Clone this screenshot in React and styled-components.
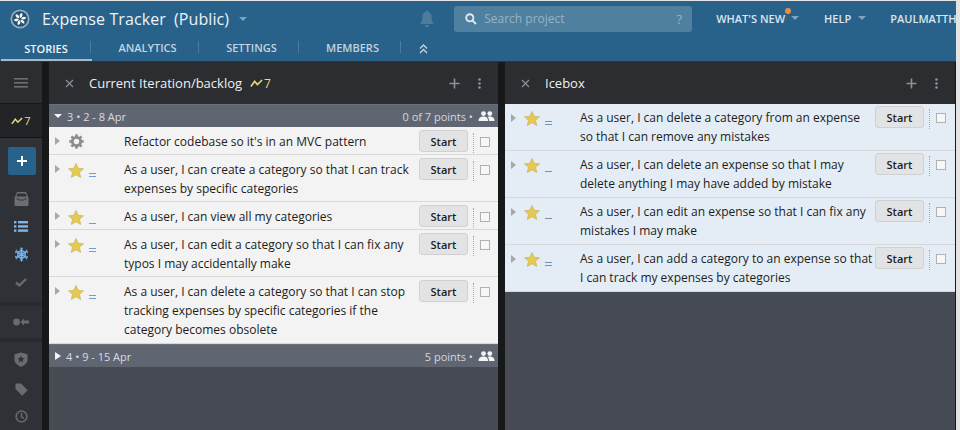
import React from 'react';
import styled, { createGlobalStyle } from 'styled-components';

const GlobalStyle = createGlobalStyle`
  html, body {
    margin: 0;
    padding: 0;
    background: #e4e4e4;
  }
  body {
    width: 960px;
    height: 430px;
    overflow: hidden;
    font-family: "Open Sans", "Liberation Sans", sans-serif;
  }
`;

const Page = styled.div`
  width: 956px;
  height: 429px;
  margin-top: 1px;
  display: flex;
  flex-direction: column;
  overflow: hidden;
  background: #17181a;
`;

const Header = styled.header`
  height: 61px;
  flex: none;
  background: #28628b;
  display: flex;
  flex-direction: column;
  border-bottom: 1px solid #1f3a4e;
  box-sizing: border-box;
`;

const TopRow = styled.div`
  height: 35px;
  flex: none;
  display: flex;
  align-items: center;
  padding-left: 10px;
  white-space: nowrap;
`;

const ProjectName = styled.div`
  margin-left: 12px;
  font-size: 16px;
  letter-spacing: 0.1px;
  color: #eef3f7;
  display: flex;
  gap: 8px;
`;

const Caret = styled.span`
  display: inline-block;
  flex: none;
  width: 0;
  height: 0;
  border-left: 4px solid transparent;
  border-right: 4px solid transparent;
  border-top: 4px solid ${(p) => p.$color || '#7fa3bd'};
  margin-left: ${(p) => p.$gap || 0}px;
  position: relative;
  top: ${(p) => p.$top || 0}px;
`;

const Bell = styled.div`
  margin-left: 173px;
  margin-right: 20px;
  display: flex;
  flex: none;
`;

const Search = styled.div`
  width: 238px;
  height: 26px;
  flex: none;
  background: #4f80a0;
  border-radius: 3px;
  display: flex;
  align-items: center;
  padding: 0 10px 0 11px;
  box-sizing: border-box;
  font-size: 12px;
  color: #95b3c8;
  gap: 7px;
`;

const SearchHint = styled.span`
  margin-left: auto;
  font-size: 13px;
`;

const TopLinks = styled.nav`
  margin-left: 24px;
  display: flex;
  align-items: center;
  flex: 1;
  min-width: 0;
  height: 100%;
`;

const TopLink = styled.span`
  position: relative;
  flex: none;
  font-size: 11px;
  font-weight: 600;
  color: #dbe6ee;
  margin-left: ${(p) => p.$space || 0}px;
`;

const Dot = styled.span`
  position: absolute;
  right: -6px;
  top: -3px;
  width: 6px;
  height: 6px;
  border-radius: 50%;
  background: #f08a35;
`;

const TabRow = styled.div`
  flex: 1;
  display: flex;
  align-items: flex-start;
  padding-top: 5px;
  position: relative;
`;

const Tab = styled.div`
  width: ${(p) => p.$w}px;
  height: 12px;
  display: flex;
  align-items: center;
  justify-content: center;
  box-sizing: border-box;
  padding-left: ${(p) => (p.$active ? 2 : 6)}px;
  padding-top: ${(p) => (p.$active ? 2 : 0)}px;
  font-size: 11px;
  font-weight: 600;
  color: ${(p) => (p.$active ? '#eef3f7' : '#c3d3df')};
  border-right: 1px solid #4a7c9e;
`;

const ActiveLine = styled.div`
  position: absolute;
  left: 1px;
  bottom: 0;
  width: 91px;
  height: 2px;
  background: #aab9c4;
`;

const Collapse = styled.div`
  margin-left: 18px;
  margin-top: 3px;
  display: flex;
`;

const Body = styled.div`
  flex: 1;
  display: flex;
  min-height: 0;
`;

const Sidebar = styled.aside`
  width: 42px;
  flex: none;
  background: #2e3236;
  display: flex;
  flex-direction: column;
`;

const SideTop = styled.div`
  height: 42px;
  flex: none;
  box-sizing: border-box;
  background: #2b2d30;
  border-bottom: 1px solid #16171a;
  display: flex;
  align-items: center;
  justify-content: center;
`;

const SideCount = styled.div`
  height: 34px;
  flex: none;
  box-sizing: border-box;
  background: #232427;
  border-bottom: 1px solid #111;
  display: flex;
  align-items: center;
  justify-content: center;
  gap: 1px;
  font-size: 11px;
  color: #e6dc7a;
`;

const AddButton = styled.div`
  width: 28px;
  height: 28px;
  flex: none;
  margin: 9px 0 10px 8px;
  background: #28628b;
  border-radius: 2px;
  display: flex;
  align-items: center;
  justify-content: center;
`;

const SideIcon = styled.div`
  height: ${(p) => p.$h}px;
  flex: none;
  display: flex;
  align-items: center;
  justify-content: center;
`;

const SideDivider = styled.div`
  height: 4px;
  flex: none;
  margin-top: ${(p) => p.$top || 0}px;
  background: #272a2e;
`;

const Gutter = styled.div`
  width: ${(p) => p.$w}px;
  flex: none;
  background: #17181a;
`;

const Panel = styled.section`
  width: ${(p) => p.$w}px;
  flex: none;
  display: flex;
  flex-direction: column;
  background: #474c54;
`;

const PanelHead = styled.div`
  height: 42px;
  flex: none;
  background: #2b2d30;
  display: flex;
  align-items: center;
  padding: 0 17px 0 16px;
  color: #eef0f2;
  font-size: 13px;
  box-sizing: border-box;
`;

const PanelTitle = styled.span`
  margin-left: 15px;
`;

const Velocity = styled.span`
  margin-left: 8px;
  display: inline-flex;
  align-items: center;
  gap: 1px;
  color: #e6dc7a;
  font-size: 12px;
`;

const HeadActions = styled.div`
  margin-left: auto;
  display: flex;
  align-items: center;
  gap: 18px;
`;

const SprintBar = styled.div`
  height: 23px;
  flex: none;
  background: #606671;
  border-top: 1px solid #6b717b;
  box-sizing: border-box;
  display: flex;
  align-items: center;
  padding: 0 3px 0 5px;
  font-size: 11px;
  color: #d8dbe0;
  gap: 5px;
`;

const SprintMeta = styled.span`
  margin-left: auto;
  display: flex;
  align-items: center;
  gap: 5px;
  font-size: 11px;
  color: #d3d7dc;
`;

const Row = styled.div`
  display: flex;
  align-items: flex-start;
  box-sizing: border-box;
  height: ${(p) => p.$h}px;
  flex: none;
  padding-top: 3px;
  background: ${(p) => (p.$ice ? '#e4edf6' : '#f3f3f3')};
  border-bottom: 1px solid #d8d8d8;
`;

const Expander = styled.span`
  width: 0;
  height: 0;
  margin: 7px 0 0 6px;
  border-top: 4px solid transparent;
  border-bottom: 4px solid transparent;
  border-left: 5px solid #a5a7a9;
  flex: none;
`;

const RowIcon = styled.span`
  width: 16px;
  margin: ${(p) => (p.$high ? 4 : 5)}px 0 0 8px;
  display: flex;
  justify-content: center;
  flex: none;
`;

const Estimate = styled.span`
  width: 7px;
  margin: ${(p) => (p.$ice ? 13 : 14)}px 0 0 5px;
  flex: none;
  display: flex;
  flex-direction: column;
  justify-content: flex-end;
  gap: 2px;
  height: 5px;
`;

const EstimateBar = styled.span`
  display: block;
  height: 1px;
  background: ${(p) => (p.$ice ? '#6f95b8' : '#6fa0cd')};
`;

const RowText = styled.div`
  width: ${(p) => (p.$ice ? 295 : 288)}px;
  margin: ${(p) => (p.$ice ? 1 : 2)}px 0 0 28px;
  flex: none;
  font-size: 12px;
  line-height: 19px;
  color: #1b1d21;
`;

const StartButton = styled.button`
  width: 49px;
  height: 22px;
  margin: ${(p) => (p.$ice ? '-1px 0 0 0' : '0 0 0 7px')};
  padding: 0;
  flex: none;
  border: 1px solid #d0d1d3;
  border-radius: 3px;
  background: #e2e3e5;
  font-family: inherit;
  font-size: 11px;
  font-weight: 600;
  color: #1b1d21;
`;

const Dotted = styled.span`
  width: 0;
  height: 20px;
  margin: ${(p) => (p.$ice ? 2 : 3)}px 0 0 5px;
  flex: none;
  border-left: 1px dotted #a8a8a8;
`;

const Check = styled.span`
  width: 8px;
  height: 8px;
  margin: ${(p) => (p.$ice ? 6 : 7)}px 0 0 6px;
  flex: none;
  border: 1px solid #b0b1b3;
  background: #f7f7f7;
`;

const Bolt = ({ size = 13 }) => (
  <svg width={size} height={size * 0.65} viewBox="0 0 14 9" fill="none">
    <path d="M1 8 L5 2.5 L8 6 L13 1" stroke="#e6dc7a" strokeWidth="1.7" />
  </svg>
);

const Close = () => (
  <svg width="9" height="9" viewBox="0 0 9 9">
    <path d="M1 1 L8 8 M8 1 L1 8" stroke="#8e9195" strokeWidth="1.2" />
  </svg>
);

const Plus = () => (
  <svg width="11" height="11" viewBox="0 0 11 11">
    <path d="M5.5 0.5 V10.5 M0.5 5.5 H10.5" stroke="#8e9195" strokeWidth="1.6" />
  </svg>
);

const Kebab = () => (
  <svg width="3" height="11" viewBox="0 0 3 11" fill="#8e9195">
    <circle cx="1.5" cy="1.5" r="1.3" />
    <circle cx="1.5" cy="5.5" r="1.3" />
    <circle cx="1.5" cy="9.5" r="1.3" />
  </svg>
);

const People = () => (
  <svg width="17" height="10" viewBox="0 0 17 10" fill="#f4f5f6">
    <circle cx="5.5" cy="2.6" r="2.4" />
    <circle cx="11.8" cy="2.6" r="2.4" />
    <path d="M0.5 10 C0.5 6.6 3 5.6 5.5 5.6 C8 5.6 10 6.6 10 10 Z" />
    <path d="M9.5 5.8 C10.2 5.6 11 5.6 11.8 5.6 C14.3 5.6 16.5 6.6 16.5 10 H11 C11 8 10.5 6.8 9.5 5.8 Z" />
  </svg>
);

const Star = () => (
  <svg width="16" height="15" viewBox="0 0 16 15">
    <path
      d="M8 0.5 L10.2 5.3 L15.5 5.8 L11.5 9.3 L12.7 14.5 L8 11.8 L3.3 14.5 L4.5 9.3 L0.5 5.8 L5.8 5.3 Z"
      fill="#e6c94f"
      stroke="#c9b362"
      strokeWidth="0.7"
      strokeLinejoin="round"
    />
  </svg>
);

const Gear = () => (
  <svg width="15" height="15" viewBox="0 0 15 15">
    <circle cx="7.5" cy="7.5" r="4.1" fill="none" stroke="#8c8d8f" strokeWidth="2.8" />
    {[0, 45, 90, 135].map((a) => (
      <rect key={a} x="6.2" y="0.3" width="2.6" height="14.4" fill="#8c8d8f" transform={`rotate(${a} 7.5 7.5)`} />
    ))}
    <circle cx="7.5" cy="7.5" r="2.7" fill="#f3f3f3" />
  </svg>
);

const Logo = () => (
  <svg width="20" height="20" viewBox="0 0 20 20">
    <circle cx="10" cy="10" r="9.5" fill="#8fb0c6" />
    <circle cx="10" cy="10" r="7.8" fill="#28506f" />
    {[0, 60, 120, 180, 240, 300].map((a) => (
      <path key={a} d="M10.4 9 C9 7.4 9.6 4.4 12 4 C13 5.6 12.6 8 10.4 9 Z" fill="#f6f8fa" transform={`rotate(${a} 10 10)`} />
    ))}
  </svg>
);

const BellIcon = () => (
  <svg width="14" height="18" viewBox="0 0 14 18" fill="#4d7c9d">
    <path d="M7 0.5 C8 0.5 8.4 1.2 8.4 2 C11 2.7 11.7 5 11.7 7.5 C11.7 10.5 12.3 12.2 13.8 14 H0.2 C1.7 12.2 2.3 10.5 2.3 7.5 C2.3 5 3 2.7 5.6 2 C5.6 1.2 6 0.5 7 0.5 Z" />
    <path d="M5 15 H9 C9 16.3 8.2 17.3 7 17.3 C5.8 17.3 5 16.3 5 15 Z" />
  </svg>
);

const SearchIcon = () => (
  <svg width="12" height="12" viewBox="0 0 12 12" fill="none" stroke="#dfe9f0" strokeWidth="1.9">
    <circle cx="4.8" cy="4.8" r="3.6" />
    <path d="M7.6 7.6 L11 11" />
  </svg>
);

const ChevronsUp = () => (
  <svg width="9" height="10" viewBox="0 0 9 10" fill="none" stroke="#c3d3df" strokeWidth="1.4">
    <path d="M1 4.5 L4.5 1 L8 4.5 M1 9 L4.5 5.5 L8 9" />
  </svg>
);

const Hamburger = () => (
  <svg width="14" height="10" viewBox="0 0 14 10" fill="#6d7073">
    <rect y="0" width="14" height="1.6" />
    <rect y="4" width="14" height="1.6" />
    <rect y="8" width="14" height="1.6" />
  </svg>
);

const Inbox = () => (
  <svg width="15" height="14" viewBox="0 0 15 14" fill="#6b6e72">
    <path d="M3 0 H12 L14.5 6 V13 Q14.5 14 13.5 14 H1.5 Q0.5 14 0.5 13 V6 Z" />
    <path d="M3.6 1.4 H11.4 L12.6 4.6 H2.4 Z M2.5 6.4 H5 V8.4 H10 V6.4 H12.5 V7.6 H2.5 Z" fill="#2e3236" />
  </svg>
);

const ListIcon = () => (
  <svg width="14" height="11" viewBox="0 0 14 11" fill="#7fb6ea">
    <rect y="0" width="2.4" height="2.4" />
    <rect y="4.2" width="2.4" height="2.4" />
    <rect y="8.4" width="2.4" height="2.4" />
    <rect x="4" y="0" width="10" height="2.4" />
    <rect x="4" y="4.2" width="10" height="2.4" />
    <rect x="4" y="8.4" width="10" height="2.4" />
  </svg>
);

const Snow = () => (
  <svg width="15" height="15" viewBox="0 0 15 15" fill="none" stroke="#7fb6ea" strokeWidth="1.2">
    <path d="M7.5 3.2 L11.2 5.3 V9.7 L7.5 11.8 L3.8 9.7 V5.3 Z" fill="#3f6f9b" />
    <path d="M7.5 0.5 V14.5 M1.4 4 L13.6 11 M13.6 4 L1.4 11" />
    <path d="M5.8 1.4 L7.5 2.8 L9.2 1.4 M5.8 13.6 L7.5 12.2 L9.2 13.6 M1 6 L3 4.6 L2.6 2.6 M14 6 L12 4.6 L12.4 2.6 M1 9 L3 10.4 L2.6 12.4 M14 9 L12 10.4 L12.4 12.4" strokeWidth="0.9" />
  </svg>
);

const CheckMark = () => (
  <svg width="12" height="9" viewBox="0 0 12 9" fill="none" stroke="#686b6f" strokeWidth="2.4">
    <path d="M1 4.5 L4.3 7.5 L11 1" />
  </svg>
);

const Merge = () => (
  <svg width="16" height="8" viewBox="0 0 16 8" fill="#686b6f">
    <circle cx="3.5" cy="4" r="3.4" />
    <path d="M7.5 4 L11 0.5 V2.6 H16 V5.4 H11 V7.5 Z" />
  </svg>
);

const Shield = () => (
  <svg width="14" height="15" viewBox="0 0 14 15">
    <path d="M7 0.5 L13.5 2.2 V7.5 C13.5 11 10.5 13.5 7 14.7 C3.5 13.5 0.5 11 0.5 7.5 V2.2 Z" fill="#686b6f" />
    <path d="M7 3.6 L8 6 L10.6 6.2 L8.6 7.9 L9.2 10.4 L7 9.1 L4.8 10.4 L5.4 7.9 L3.4 6.2 L6 6 Z" fill="#2e3236" />
  </svg>
);

const Tag = () => (
  <svg width="13" height="13" viewBox="0 0 13 13" fill="#686b6f">
    <path d="M0.5 1 C0.5 0.7 0.7 0.5 1 0.5 H6 L12.7 7.2 L7.2 12.7 L0.5 6 Z" />
  </svg>
);

const Clock = () => (
  <svg width="13" height="13" viewBox="0 0 13 13" fill="none" stroke="#686b6f" strokeWidth="1.5">
    <circle cx="6.5" cy="6.5" r="5.4" />
    <path d="M6.5 3 V6.8 L9 8.4" />
  </svg>
);

const AddPlus = () => (
  <svg width="12" height="12" viewBox="0 0 12 12">
    <path d="M6 1 V11 M1 6 H11" stroke="#fff" strokeWidth="2" />
  </svg>
);

const SprintCaret = styled.span`
  width: 0;
  height: 0;
  margin-left: 1px;
  border-top: 4px solid transparent;
  border-bottom: 4px solid transparent;
  border-left: 6px solid #f4f5f6;
`;

const StoryRow = ({ h, icon = 'star', points = 2, text, ice }) => (
  <Row $h={h} $ice={ice}>
    <Expander />
    <RowIcon $high={ice || icon === 'gear'}>{icon === 'gear' ? <Gear /> : <Star />}</RowIcon>
    <Estimate $ice={ice}>
      {Array.from({ length: points }).map((_, i) => (
        <EstimateBar key={i} $ice={ice} />
      ))}
    </Estimate>
    <RowText $ice={ice}>{text}</RowText>
    <StartButton $ice={ice}>Start</StartButton>
    <Dotted $ice={ice} />
    <Check $ice={ice} />
  </Row>
);

const backlog = [
  { h: 28, icon: 'gear', points: 0, text: "Refactor codebase so it's in an MVC pattern" },
  { h: 47, points: 2, text: 'As a user, I can create a category so that I can track expenses by specific categories' },
  { h: 28, points: 1, text: 'As a user, I can view all my categories' },
  { h: 47, points: 2, text: 'As a user, I can edit a category so that I can fix any typos I may accidentally make' },
  { h: 67, points: 2, text: 'As a user, I can delete a category so that I can stop tracking expenses by specific categories if the category becomes obsolete' },
];

const icebox = [
  { points: 2, text: 'As a user, I can delete a category from an expense so that I can remove any mistakes' },
  { points: 1, text: 'As a user, I can delete an expense so that I may delete anything I may have added by mistake' },
  { points: 1, text: 'As a user, I can edit an expense so that I can fix any mistakes I may make' },
  { points: 2, text: 'As a user, I can add a category to an expense so that I can track my expenses by categories' },
];

const App = () => (
  <Page>
    <GlobalStyle />
    <Header>
      <TopRow>
        <Logo />
        <ProjectName>
          <span>Expense Tracker</span>
          <span>(Public)</span>
        </ProjectName>
        <Caret $gap={10} />
        <Bell>
          <BellIcon />
        </Bell>
        <Search>
          <SearchIcon />
          <span>Search project</span>
          <SearchHint>?</SearchHint>
        </Search>
        <TopLinks>
          <TopLink>
            WHAT'S NEW
            <Dot />
          </TopLink>
          <Caret $gap={6} $top={-1} />
          <TopLink $space={25}>HELP</TopLink>
          <Caret $gap={7} $top={-1} />
          <TopLink $space={24}>PAULMATTH</TopLink>
        </TopLinks>
      </TopRow>
      <TabRow>
        <Tab $w={91} $active>STORIES</Tab>
        <Tab $w={108}>ANALYTICS</Tab>
        <Tab $w={100}>SETTINGS</Tab>
        <Tab $w={102}>MEMBERS</Tab>
        <Collapse>
          <ChevronsUp />
        </Collapse>
        <ActiveLine />
      </TabRow>
    </Header>
    <Body>
      <Sidebar>
        <SideTop>
          <Hamburger />
        </SideTop>
        <SideCount>
          <Bolt size={12} />7
        </SideCount>
        <AddButton>
          <AddPlus />
        </AddButton>
        <SideIcon $h={27}><Inbox /></SideIcon>
        <SideIcon $h={28}><ListIcon /></SideIcon>
        <SideIcon $h={28}><Snow /></SideIcon>
        <SideIcon $h={28}><CheckMark /></SideIcon>
        <SideDivider $top={6} />
        <SideIcon $h={32}><Merge /></SideIcon>
        <SideDivider />
        <SideIcon $h={34}><Shield /></SideIcon>
        <SideIcon $h={26}><Tag /></SideIcon>
        <SideIcon $h={29}><Clock /></SideIcon>
      </Sidebar>
      <Gutter $w={7} />
      <Panel $w={449}>
        <PanelHead>
          <Close />
          <PanelTitle>Current Iteration/backlog</PanelTitle>
          <Velocity>
            <Bolt />7
          </Velocity>
          <HeadActions>
            <Plus />
            <Kebab />
          </HeadActions>
        </PanelHead>
        <SprintBar>
          <Caret $color="#f4f5f6" />
          <span>3 • 2 - 8 Apr</span>
          <SprintMeta>
            0 of 7 points •
            <People />
          </SprintMeta>
        </SprintBar>
        {backlog.map((s) => (
          <StoryRow key={s.text} {...s} />
        ))}
        <SprintBar>
          <SprintCaret />
          <span>4 • 9 - 15 Apr</span>
          <SprintMeta>
            5 points •
            <People />
          </SprintMeta>
        </SprintBar>
      </Panel>
      <Gutter $w={7} />
      <Panel $w={450}>
        <PanelHead>
          <Close />
          <PanelTitle>Icebox</PanelTitle>
          <HeadActions>
            <Plus />
            <Kebab />
          </HeadActions>
        </PanelHead>
        {icebox.map((s) => (
          <StoryRow key={s.text} {...s} h={47} ice />
        ))}
      </Panel>
    </Body>
  </Page>
);

export default App;
